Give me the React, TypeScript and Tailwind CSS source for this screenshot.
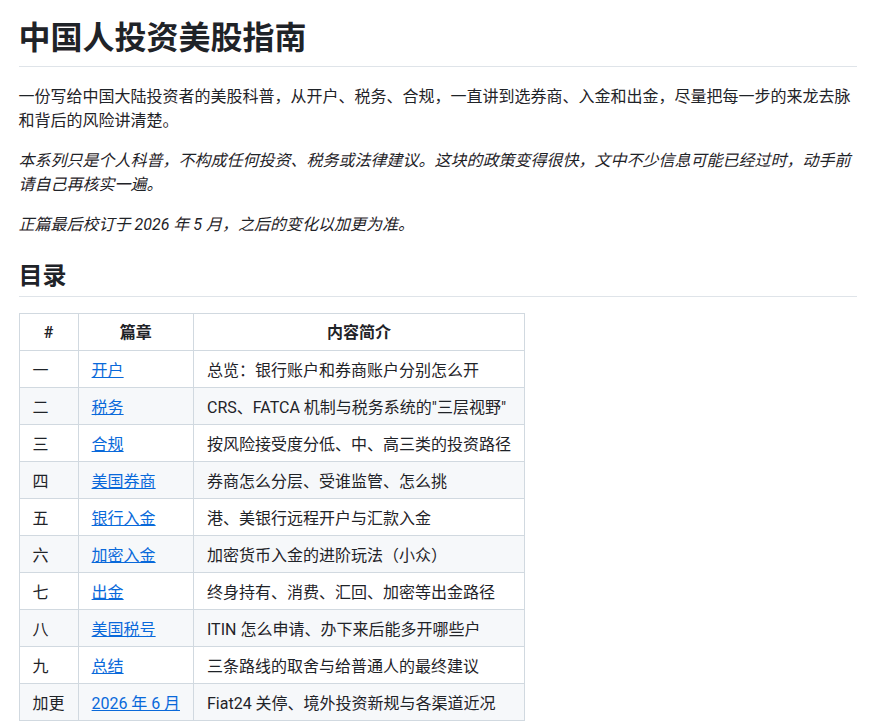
const rows = [
  ["一", "开户", "总览：银行账户和券商账户分别怎么开"],
  ["二", "税务", "CRS、FATCA 机制与税务系统的\"三层视野\""],
  ["三", "合规", "按风险接受度分低、中、高三类的投资路径"],
  ["四", "美国券商", "券商怎么分层、受谁监管、怎么挑"],
  ["五", "银行入金", "港、美银行远程开户与汇款入金"],
  ["六", "加密入金", "加密货币入金的进阶玩法（小众）"],
  ["七", "出金", "终身持有、消费、汇回、加密等出金路径"],
  ["八", "美国税号", "ITIN 怎么申请、办下来后能多开哪些户"],
  ["九", "总结", "三条路线的取舍与给普通人的最终建议"],
  ["加更", "2026 年 6 月", "Fiat24 关停、境外投资新规与各渠道近况"],
];

export default function App() {
  return (
    <div className="h-[723px] overflow-hidden bg-white pl-[18.6px] pr-[20px] pt-[18px] text-[16px] leading-[24px] text-[#1f2328] font-['Roboto','Noto_Sans_CJK_SC',sans-serif]">
      <h1 className="border-b border-[#d1d9e0b3] pb-[8px] text-[32px] leading-[40px] font-semibold">中国人投资美股指南</h1>
      <p className="mt-[18px] mb-[16px]">一份写给中国大陆投资者的美股科普，从开户、税务、合规，一直讲到选券商、入金和出金，尽量把每一步的来龙去脉和背后的风险讲清楚。</p>
      <p className="mb-[16px] italic">本系列只是个人科普，不构成任何投资、税务或法律建议。这块的政策变得很快，文中不少信息可能已经过时，动手前请自己再核实一遍。</p>
      <p className="mb-[24px] italic">正篇最后校订于 2026 年 5 月，之后的变化以加更为准。</p>
      <h2 className="mb-[16px] border-b border-[#d1d9e0b3] pb-[5px] text-[24px] leading-[30px] font-semibold">目录</h2>
      <table className="border-collapse">
        <thead>
          <tr className="h-[37px]">
            <th className="border border-[#d1d9e0] px-[13px] pt-[2px] font-semibold">#</th>
            <th className="border border-[#d1d9e0] px-[13px] pt-[2px] font-semibold">篇章</th>
            <th className="border border-[#d1d9e0] px-[13px] pt-[2px] font-semibold">内容简介</th>
          </tr>
        </thead>
        <tbody>
          {rows.map((r, i) => (
            <tr key={i} className={i % 2 === 1 ? "h-[37px] bg-[#f6f8fa]" : "h-[37px]"}>
              <td className="border border-[#d1d9e0] px-[13px] pt-[3px]">{r[0]}</td>
              <td className="border border-[#d1d9e0] px-[13px] pt-[3px]">
                <a href="#" className={i === 9 ? "text-[#0969da] underline tracking-[-0.05px]" : "text-[#0969da] underline"}>{r[1]}</a>
              </td>
              <td className="border border-[#d1d9e0] px-[13px] pt-[3px]">{r[2]}</td>
            </tr>
          ))}
        </tbody>
      </table>
    </div>
  );
}
